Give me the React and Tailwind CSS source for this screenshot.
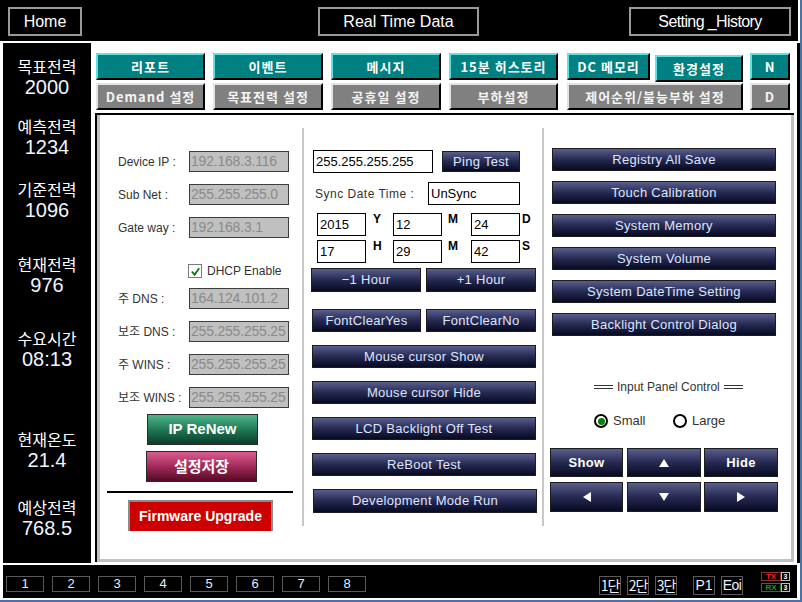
import React from 'react';

const navy =
  'flex items-center justify-center border border-[#1c1c1c] bg-linear-to-b from-[#5a5e8c] via-[#262a52] to-[#080a22] text-[13px] text-[#dfe5ff] tracking-[0.3px] whitespace-nowrap';

const TealTab = ({ className = '', children }) => (
  <div
    className={`flex h-[27px] items-center justify-center border-2 border-t-[#5fe2e2] border-l-[#5fe2e2] border-r-black border-b-black bg-[#008080] text-[13px] font-bold tracking-[1px] text-white whitespace-nowrap ${className}`}
  >
    {children}
  </div>
);

const GrayTab = ({ className = '', children }) => (
  <div
    className={`flex h-[27px] items-center justify-center border-2 border-t-[#e4e4e4] border-l-[#e4e4e4] border-r-black border-b-black bg-[#808080] text-[13px] font-bold tracking-[1px] text-[#f4f4f4] whitespace-nowrap ${className}`}
  >
    {children}
  </div>
);

const Field = ({ label, value, className = '' }) => (
  <div className={`ml-[18px] flex h-[21px] items-center ${className}`}>
    <span className="w-[71px] text-[12px] leading-none text-[#333] whitespace-nowrap">{label}</span>
    <div className="h-[21px] w-[100px] overflow-hidden whitespace-nowrap border border-[#3c3c3c] bg-[#c0c0c0] pl-[1px] text-[14px] leading-[19px] tracking-[-0.2px] text-[#8a8a8a]">
      {value}
    </div>
  </div>
);

const Box = ({ className = '', children }) => (
  <div className={`flex h-[23px] items-center overflow-hidden whitespace-nowrap border border-black bg-white pl-[2px] text-[13px] font-normal text-black ${className}`}>
    {children}
  </div>
);

const Side = ({ label, value, className = '' }) => (
  <div className={`flex flex-col items-center ${className}`}>
    <div className="h-[20px] font-['Noto_Sans_CJK_KR',sans-serif] text-[16px] leading-[20px] text-white">{label}</div>
    <div className="h-[22px] text-[20px] leading-[22px] text-[#f2f5ff]">{value}</div>
  </div>
);

const Tri = ({ dir }) => {
  const pts = {
    up: '0,8 5,0 10,8',
    down: '0,0 10,0 5,8',
    left: '8,0 8,10 0,5',
    right: '0,0 0,10 8,5',
  }[dir];
  const vb = dir === 'up' || dir === 'down' ? '0 0 10 8' : '0 0 8 10';
  const size = dir === 'up' || dir === 'down' ? 'h-[8px] w-[10px]' : 'h-[10px] w-[8px]';
  return (
    <svg viewBox={vb} className={size}>
      <polygon points={pts} fill="#fff" />
    </svg>
  );
};

export default function App() {
  const nums = ['1', '2', '3', '4', '5', '6', '7', '8'];
  return (
    <div className="h-[602px] w-[802px] overflow-hidden border-r-2 border-b-2 border-[#4a72aa] bg-white font-['Liberation_Sans','Noto_Sans_CJK_KR',sans-serif]">
      {/* top bar */}
      <div className="flex h-[41px] w-[798px] items-start bg-black pt-[7px] text-[16px] text-white">
        <div className="ml-[8px] flex h-[29px] w-[74px] items-center justify-center border-2 border-[#9a9a9a]">Home</div>
        <div className="ml-[236px] flex h-[29px] w-[161px] items-center justify-center border-2 border-[#9a9a9a]">Real Time Data</div>
        <div className="ml-[150px] flex h-[29px] w-[162px] items-center justify-center border-2 border-[#9a9a9a] tracking-[-0.6px]">
          Setting _History
        </div>
      </div>

      {/* body */}
      <div className="mt-[2px] flex h-[520px]">
        {/* sidebar */}
        <div className="ml-[3px] flex w-[88px] flex-col bg-black">
          <Side className="mt-[13px]" label="목표전력" value="2000" />
          <Side className="mt-[18px]" label="예측전력" value="1234" />
          <Side className="mt-[21px]" label="기준전력" value="1096" />
          <Side className="mt-[33px]" label="현재전력" value="976" />
          <Side className="mt-[32px]" label="수요시간" value="08:13" />
          <Side className="mt-[59px]" label="현재온도" value="21.4" />
          <Side className="mt-[26px]" label="예상전력" value="768.5" />
        </div>

        {/* main */}
        <div className="ml-[4px] w-[699px] pt-[10px]">
          <div className="flex font-['Noto_Sans_CJK_KR',sans-serif]">
            <TealTab className="ml-[1px] w-[109px]">리포트</TealTab>
            <TealTab className="ml-[8px] w-[110px]">이벤트</TealTab>
            <TealTab className="ml-[8px] w-[110px]">메시지</TealTab>
            <TealTab className="ml-[8px] w-[109px]">15분 히스토리</TealTab>
            <TealTab className="ml-[9px] w-[83px]">DC 메모리</TealTab>
            <TealTab className="ml-[5px] w-[88px] translate-y-[2px]">환경설정</TealTab>
            <TealTab className="ml-[7px] w-[40px]">N</TealTab>
          </div>
          <div className="mt-[3px] flex font-['Noto_Sans_CJK_KR',sans-serif]">
            <GrayTab className="ml-[1px] w-[109px]">Demand 설정</GrayTab>
            <GrayTab className="ml-[8px] w-[110px]">목표전력 설정</GrayTab>
            <GrayTab className="ml-[8px] w-[110px]">공휴일 설정</GrayTab>
            <GrayTab className="ml-[8px] w-[109px]">부하설정</GrayTab>
            <GrayTab className="ml-[9px] w-[176px]">제어순위/불능부하 설정</GrayTab>
            <GrayTab className="ml-[7px] w-[40px]">D</GrayTab>
          </div>

          {/* content box */}
          <div className="mt-[3px] h-[449px] border-t-2 border-l-2 border-black">
            <div className="flex h-full border-r-[3px] border-b-[3px] border-l-[3px] border-[#c0c0c0] bg-white">
              {/* left column */}
              <div className="flex w-[202px] flex-col pt-[36px]">
                <Field label="Device IP :" value="192.168.3.116" />
                <Field className="mt-[12px]" label="Sub Net :" value="255.255.255.0" />
                <Field className="mt-[12px]" label="Gate way :" value="192.168.3.1" />
                <div className="mt-[26px] ml-[88px] flex h-[14px] items-center">
                  <div className="flex h-[14px] w-[14px] items-center justify-center border border-[#7a7a7a] bg-white">
                    <svg viewBox="0 0 12 12" className="h-[11px] w-[11px]">
                      <path d="M2 6 L5 9.5 L10 2.5" fill="none" stroke="#008000" strokeWidth="2" />
                    </svg>
                  </div>
                  <span className="ml-[5px] text-[12px] text-[#333]">DHCP Enable</span>
                </div>
                <Field className="mt-[10px]" label="주 DNS :" value="164.124.101.2" />
                <Field className="mt-[12px]" label="보조 DNS :" value="255.255.255.25" />
                <Field className="mt-[12px]" label="주 WINS :" value="255.255.255.25" />
                <Field className="mt-[12px]" label="보조 WINS :" value="255.255.255.25" />
                <div className="mt-[6px] ml-[47px] flex h-[31px] w-[111px] items-center justify-center border border-[#2a2a2a] bg-linear-to-b from-[#4fb58b] via-[#1f7a56] to-[#0b3d2a] text-[15px] font-bold text-white">
                  IP ReNew
                </div>
                <div className="mt-[6px] ml-[46px] flex h-[31px] w-[111px] items-center justify-center border border-[#2a2a2a] bg-linear-to-b from-[#dc5c8f] via-[#a22a5a] to-[#560a26] font-['Noto_Sans_CJK_KR',sans-serif] text-[15px] font-bold text-white">
                  설정저장
                </div>
                <div className="mt-[9px] ml-[7px] h-[2px] w-[186px] bg-black" />
                <div className="mt-[7px] ml-[28px] flex h-[31px] w-[145px] items-center justify-center border-x-2 border-t-2 border-[#8a8a8a] bg-[#cc0000] text-[14px] font-bold text-white">
                  Firmware Upgrade
                </div>
              </div>

              <div className="mt-[13px] h-[398px] w-[2px] bg-[#c8c8c8]" />

              {/* middle column */}
              <div className="flex w-[238px] flex-col pt-[35px]">
                <div className="flex items-start">
                  <Box className="ml-[9px] w-[120px]">255.255.255.255</Box>
                  <div className={`${navy} mt-[1px] ml-[9px] h-[21px] w-[78px]`}>Ping Test</div>
                </div>
                <div className="mt-[9px] flex items-start">
                  <span className="ml-[11px] w-[113px] pt-[3px] text-[12px] tracking-[0.5px] text-[#333]">Sync Date Time :</span>
                  <Box className="w-[92px]">UnSync</Box>
                </div>
                <div className="mt-[8px] flex items-start text-[12px] font-bold text-black">
                  <Box className="ml-[13px] w-[49px]">2015</Box>
                  <span className="w-[27px] pl-[7px] leading-[12px]">Y</span>
                  <Box className="w-[49px]">12</Box>
                  <span className="w-[29px] pl-[6px] leading-[12px]">M</span>
                  <Box className="w-[49px]">24</Box>
                  <span className="pl-[2px] leading-[12px]">D</span>
                </div>
                <div className="mt-[4px] flex items-start text-[12px] font-bold text-black">
                  <Box className="ml-[13px] w-[49px]">17</Box>
                  <span className="w-[27px] pl-[7px] leading-[12px]">H</span>
                  <Box className="w-[49px]">29</Box>
                  <span className="w-[29px] pl-[6px] leading-[12px]">M</span>
                  <Box className="w-[49px]">42</Box>
                  <span className="pl-[2px] leading-[12px]">S</span>
                </div>
                <div className="mt-[5px] flex">
                  <div className={`${navy} ml-[7px] h-[24px] w-[110px]`}>−1 Hour</div>
                  <div className={`${navy} ml-[5px] h-[24px] w-[110px]`}>+1 Hour</div>
                </div>
                <div className="mt-[17px] flex">
                  <div className={`${navy} ml-[8px] h-[23px] w-[109px]`}>FontClearYes</div>
                  <div className={`${navy} ml-[5px] h-[23px] w-[110px]`}>FontClearNo</div>
                </div>
                <div className={`${navy} mt-[13px] ml-[8px] h-[23px] w-[224px]`}>Mouse cursor Show</div>
                <div className={`${navy} mt-[13px] ml-[8px] h-[23px] w-[224px]`}>Mouse cursor Hide</div>
                <div className={`${navy} mt-[13px] ml-[8px] h-[23px] w-[224px]`}>LCD Backlight Off Test</div>
                <div className={`${navy} mt-[13px] ml-[8px] h-[23px] w-[224px]`}>ReBoot Test</div>
                <div className={`${navy} mt-[13px] ml-[9px] h-[24px] w-[224px]`}>Development Mode Run</div>
              </div>

              <div className="mt-[13px] h-[398px] w-[2px] bg-[#c8c8c8]" />

              {/* right column */}
              <div className="flex flex-1 flex-col pt-[33px]">
                {['Registry All Save', 'Touch Calibration', 'System Memory', 'System Volume', 'System DateTime Setting', 'Backlight Control Dialog'].map(
                  (t, i) => (
                    <div key={t} className={`${navy} ml-[8px] h-[23px] w-[224px] ${i ? 'mt-[10px]' : ''}`}>
                      {t}
                    </div>
                  )
                )}
                <div className="mt-[44px] ml-[50px] flex h-[14px] items-center text-[12px] text-[#333]">
                  <div className="h-[4px] w-[19px] border-y border-[#333]" />
                  <span className="mx-[4px]">Input Panel Control</span>
                  <div className="h-[4px] w-[19px] border-y border-[#333]" />
                </div>
                <div className="mt-[20px] ml-[50px] flex h-[14px] items-center text-[13px] text-[#333]">
                  <div className="flex h-[14px] w-[14px] items-center justify-center rounded-full border-2 border-black bg-white">
                    <div className="h-[7px] w-[7px] rounded-full bg-[#008000]" />
                  </div>
                  <span className="ml-[5px] w-[60px]">Small</span>
                  <div className="h-[14px] w-[14px] rounded-full border-2 border-black bg-white" />
                  <span className="ml-[5px]">Large</span>
                </div>
                <div className="mt-[20px] flex text-[13px] font-bold">
                  <div className={`${navy} ml-[6px] h-[29px] w-[73px] font-bold text-white`}>Show</div>
                  <div className={`${navy} ml-[4px] h-[29px] w-[74px]`}>
                    <Tri dir="up" />
                  </div>
                  <div className={`${navy} ml-[3px] h-[29px] w-[74px] font-bold text-white`}>Hide</div>
                </div>
                <div className="mt-[5px] flex">
                  <div className={`${navy} ml-[6px] h-[30px] w-[73px]`}>
                    <Tri dir="left" />
                  </div>
                  <div className={`${navy} ml-[4px] h-[30px] w-[74px]`}>
                    <Tri dir="down" />
                  </div>
                  <div className={`${navy} ml-[3px] h-[30px] w-[74px]`}>
                    <Tri dir="right" />
                  </div>
                </div>
              </div>
            </div>
          </div>
        </div>

        <div className="ml-[3px] w-[3px] bg-black" />
      </div>

      {/* bottom bar */}
      <div className="mt-[2px] ml-[3px] flex h-[33px] w-[794px] items-start justify-between bg-black">
        <div className="mt-[11px] ml-[3px] flex gap-[8px]">
          {nums.map((n) => (
            <div key={n} className="flex h-[16px] w-[38px] items-center justify-center border border-[#5a5a5a] text-[13px] text-[#e6ecff]">
              {n}
            </div>
          ))}
        </div>
        <div className="mr-[7px] flex items-start">
          {['1단', '2단', '3단'].map((t, i) => (
            <div
              key={t}
              className={`mt-[11px] flex h-[19px] w-[22px] items-center justify-center border border-[#5a5a5a] font-['Noto_Sans_CJK_KR',sans-serif] text-[14px] tracking-[-1px] text-[#eef2ff] ${i ? 'ml-[6px]' : ''}`}
            >
              {t}
            </div>
          ))}
          <div className="mt-[11px] ml-[16px] flex h-[19px] w-[22px] items-center justify-center border border-[#5a5a5a] text-[14px] text-[#eef2ff]">P1</div>
          <div className="mt-[11px] ml-[6px] flex h-[19px] w-[22px] items-center justify-center border border-[#5a5a5a] text-[14px] tracking-[-0.5px] text-[#eef2ff]">Eoi</div>
          <div className="mt-[7px] ml-[18px] flex flex-col gap-[2px]">
            <div className="flex">
              <div className="flex h-[9px] w-[20px] items-center justify-center border border-[#8a3030] text-[8px] leading-none font-bold text-[#ff2020]">TX</div>
              <div className="flex h-[9px] w-[9px] items-center justify-center border border-[#bbb] text-[7px] leading-none font-bold text-white">3</div>
            </div>
            <div className="flex">
              <div className="flex h-[9px] w-[20px] items-center justify-center border border-[#307030] text-[8px] leading-none font-bold text-[#1a9a1a]">RX</div>
              <div className="flex h-[9px] w-[9px] items-center justify-center border border-[#bbb] text-[7px] leading-none font-bold text-white">3</div>
            </div>
          </div>
        </div>
      </div>
    </div>
  );
}
